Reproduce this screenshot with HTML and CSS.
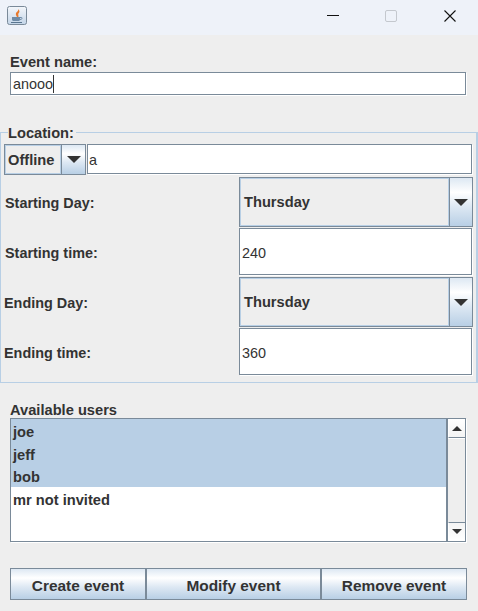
FILE: index.html
```html
<!DOCTYPE html>
<html lang="en">
<head>
<meta charset="utf-8">
<title>Event</title>
<link rel="stylesheet" href="styles.css">
</head>
<body>
<div class="window">
  <header class="titlebar">
    <svg class="app-icon" width="20" height="19" viewBox="0 0 20 19">
      <defs>
        <linearGradient id="iconbg" x1="0" y1="0" x2="0" y2="1">
          <stop offset="0" stop-color="#f4f7fb"/>
          <stop offset="1" stop-color="#c3d5e8"/>
        </linearGradient>
      </defs>
      <rect x="0.5" y="0.5" width="19" height="18" rx="2" fill="url(#iconbg)" stroke="#7a8a99"/>
      <path d="M11 3C12.5 5 8 6 9 9C9.5 10.5 10.5 11 10 12C13 10.5 10.5 9 11.5 7.5C12.2 6.5 13.5 5.5 11 3Z" fill="#e8792c"/>
      <path d="M5 11H13V13.5C13 14.5 12 15 11 15H7C6 15 5 14.5 5 13.5Z" fill="#6f8ba6"/>
      <path d="M13 11.5H14.5C15.5 11.5 15.5 13.5 13 13.5" fill="none" stroke="#6f8ba6"/>
      <path d="M4 16.5H15" stroke="#5a7690"/>
    </svg>
    <div class="controls">
      <span class="minimize"></span>
      <span class="maximize"></span>
      <svg class="close" width="12" height="12" viewBox="0 0 12 12"><path d="M0.5 0.5L11.5 11.5M11.5 0.5L0.5 11.5" stroke="#111" stroke-width="1.1" fill="none"/></svg>
    </div>
  </header>

  <main class="content">
    <section class="event-name">
      <div class="label block-label">Event name:</div>
      <div class="field name-field"><span class="caret">anooo</span></div>
    </section>

    <section class="location">
      <div class="legend label">Location:</div>
      <div class="loc-row">
        <div class="combo small-combo">
          <div class="combo-value label">Offline</div>
          <div class="combo-btn"><span class="arrow-down"></span></div>
        </div>
        <div class="field loc-field">a</div>
      </div>
      <div class="grid">
        <div class="label row-label">Starting Day:</div>
        <div class="combo big-combo">
          <div class="combo-value label">Thursday</div>
          <div class="combo-btn"><span class="arrow-down"></span></div>
        </div>
        <div class="label row-label">Starting time:</div>
        <div class="field grid-field">240</div>
        <div class="label row-label end">Ending Day:</div>
        <div class="combo big-combo">
          <div class="combo-value label">Thursday</div>
          <div class="combo-btn"><span class="arrow-down"></span></div>
        </div>
        <div class="label row-label end">Ending time:</div>
        <div class="field grid-field">360</div>
      </div>
    </section>

    <section class="users">
      <div class="label users-label">Available users</div>
      <div class="list">
        <ul class="items">
          <li class="item selected">joe</li>
          <li class="item selected">jeff</li>
          <li class="item selected">bob</li>
          <li class="item">mr not invited</li>
        </ul>
        <div class="scrollbar">
          <div class="scroll-btn"><span class="arrow-up"></span></div>
          <div class="track"></div>
          <div class="scroll-btn"><span class="arrow-down small"></span></div>
        </div>
      </div>
    </section>

    <div class="buttons">
      <button class="btn first">Create event</button>
      <button class="btn">Modify event</button>
      <button class="btn last">Remove event</button>
    </div>
  </main>
</div>
</body>
</html>
```
FILE: styles.css
```css
* { box-sizing: border-box; }
html, body { margin: 0; padding: 0; }
body {
  width: 478px;
  height: 611px;
  overflow: hidden;
  background: #eeeeee;
  color: #333333;
  font-family: "Liberation Sans", Arial, sans-serif;
  font-size: 14px;
}
.window { display: flex; flex-direction: column; height: 611px; }

.titlebar {
  height: 35px;
  flex: none;
  background: #eef2f9;
  display: flex;
  justify-content: space-between;
  padding: 6px 22px 0 7px;
}
.app-icon { display: block; }
.controls { display: flex; gap: 46px; padding-top: 4px; height: 16px; }
.minimize { width: 12px; height: 1px; margin-top: 5px; background: #111; }
.maximize { width: 12px; height: 12px; border: 1px solid #c4c8ce; border-radius: 2px; margin-right: 1px; }
.close { display: block; }

.label { font-weight: 700; font-size: 14.67px; }
.field {
  background: #fff;
  border: 1px solid #7a8a99;
  box-shadow: 1px 1px 0 #fff;
  font-size: 14.4px;
  display: flex;
  align-items: center;
  padding: 2px 0 0 1px;
}

.event-name { padding: 18px 12px 0 10px; }
.block-label { line-height: 18px; margin-bottom: 1px; }
.name-field { height: 23px; align-items: flex-start; padding-left: 2px; }
.caret { border-right: 1px solid #333; line-height: 18px; }

.location {
  position: relative;
  margin-top: 37px;
  height: 251px;
  border: 1px solid #b8cfe5;
  border-right-width: 2px;
  padding-top: 11px;
}
.legend {
  position: absolute;
  left: 7px;
  top: -9px;
  line-height: 18px;
  padding-right: 2px;
  background: #eeeeee;
}
.loc-row { display: flex; padding: 0 4px 0 3px; height: 33px; }
.loc-field { flex: 1; height: 30px; margin-left: 1px; }

.combo { display: flex; border: 1px solid #7a8a99; }
.small-combo { width: 82px; height: 31px; }
.big-combo { height: 50px; margin-right: 3px; }
.combo-value {
  flex: 1;
  border: 1px solid #b8cfe5;
  background: #eeeeee;
  display: flex;
  align-items: center;
  padding-left: 3px;
}
.small-combo .combo-value { padding-left: 2px; }
.combo-btn {
  width: 23px;
  flex: none;
  border-left: 1px solid #7a8a99;
  background: linear-gradient(#dde8f3, #fff 30%, #dde8f3 60%, #b8cfe5);
  display: flex;
  align-items: center;
  justify-content: center;
}
.small-combo .combo-btn { width: 24px; }
.arrow-down {
  width: 0;
  height: 0;
  border-left: 7px solid transparent;
  border-right: 7px solid transparent;
  border-top: 7px solid #333;
}
.arrow-down.small {
  border-left-width: 5px;
  border-right-width: 5px;
  border-top-width: 5px;
}
.arrow-up {
  width: 0;
  height: 0;
  border-left: 5px solid transparent;
  border-right: 5px solid transparent;
  border-bottom: 5px solid #333;
}

.grid {
  display: grid;
  grid-template-columns: 238px 1fr;
  grid-auto-rows: 50px;
}
.row-label {
  display: flex;
  align-items: center;
  padding: 2px 0 0 4px;
  font-size: 14.4px;
}
.row-label.end { padding-left: 3px; }
.grid-field { height: 47px; margin: 1px 4px 0 0; padding-left: 2px; }

.users { padding: 19px 12px 0 10px; }
.users-label { line-height: 16px; margin-bottom: -1px; }
.list {
  display: flex;
  height: 124px;
  margin-top: 1px;
  border: 1px solid #7a8a99;
  box-shadow: 1px 1px 0 #fff;
  background: #fff;
}
.items { flex: 1; list-style: none; margin: 0; padding: 0; }
.item {
  height: 22.67px;
  padding: 2px 0 0 2px;
  line-height: 22.67px;
  font-weight: 700;
  font-size: 14.67px;
}
.selected { background: #b8cfe5; }
.scrollbar {
  width: 19px;
  flex: none;
  display: flex;
  flex-direction: column;
  background: #eeeeee;
  border-left: 2px solid #7a8a99;
}
.scroll-btn {
  height: 19px;
  flex: none;
  background: #eeeeee;
  border: 1px solid #fff;
  border-right: 0;
  display: flex;
  align-items: center;
  justify-content: center;
}
.scroll-btn:first-child { background: linear-gradient(#fff, #f4f4f4); border-bottom: 1px solid #7a8a99; }
.scroll-btn:last-child { background: linear-gradient(#f4f4f4, #fff); border-top: 1px solid #7a8a99; }
.track { flex: 1; border-top: 1px solid #fff; }

.buttons {
  display: grid;
  grid-template-columns: 135px 175px 147px;
  margin: 26px 0 0 10px;
}
.btn {
  height: 32px;
  padding: 4px 0 0;
  font-family: inherit;
  font-size: 15.4px;
  font-weight: 700;
  color: #333333;
  background: linear-gradient(#dde8f3, #fff 30%, #dde8f3 60%, #b8cfe5);
  border: 1px solid #7a8a99;
  border-width: 1px 0 1px 2px;
}
.btn.first { border-left-width: 1px; }
.btn.last { border-right-width: 1px; }
```
